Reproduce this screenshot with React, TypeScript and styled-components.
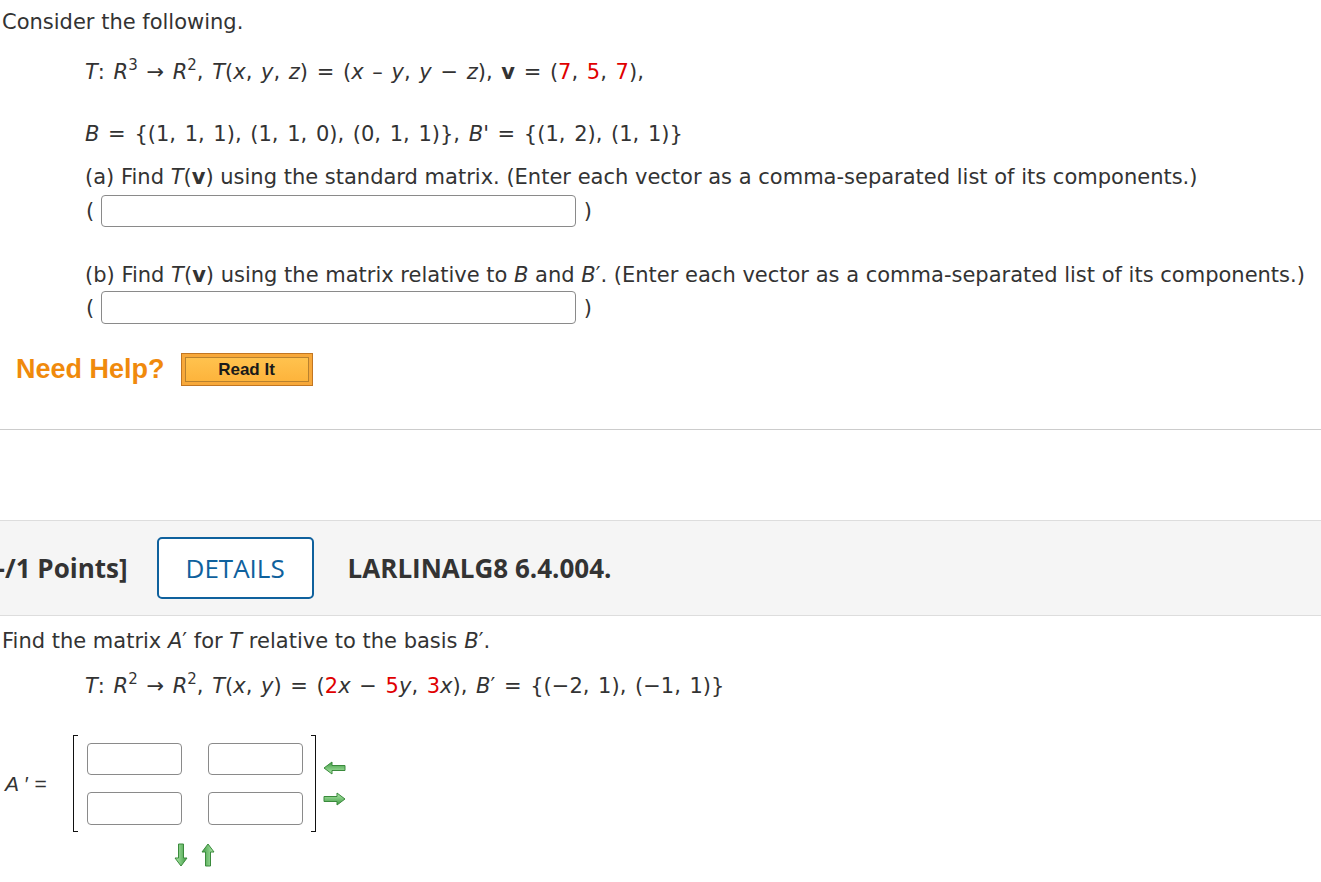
import React from "react";
import styled, { createGlobalStyle } from "styled-components";

const GlobalStyle = createGlobalStyle`
    html, body {
        margin: 0;
        padding: 0;
        background: #ffffff;
    }
    body {
        font-family: "DejaVu Sans", Verdana, sans-serif;
        color: #333333;
        overflow: hidden;
    }
`;

const Page = styled.div`
    width: 1321px;
    height: 882px;
    overflow: hidden;
`;

const Question = styled.div`
    padding: 9px 0 0 2px;
    font-size: 21px;
    line-height: 26px;
`;

const Line = styled.div<{ $indent?: number; $top?: number; $math?: boolean }>`
    padding-left: ${(p) => p.$indent ?? 0}px;
    margin-top: ${(p) => p.$top ?? 0}px;
    white-space: nowrap;
    word-spacing: ${(p) => (p.$math ? "2px" : "normal")};
`;

const I = styled.i`
    font-style: italic;
`;

const Red = styled.span`
    color: #e00000;
`;

const Bold = styled.b`
    font-weight: bold;
`;

const Sup = styled.sup`
    font-size: 15px;
    line-height: 0;
    vertical-align: 9px;
`;

const AnswerRow = styled.div<{ $top: number }>`
    display: flex;
    align-items: center;
    padding-left: 84px;
    margin-top: ${(p) => p.$top}px;
    gap: 1px;
    height: 33px;
`;

const Paren = styled.span`
    font-size: 21px;
    line-height: 26px;
    width: 14px;
`;

const TextBox = styled.div<{ $w: number; $h: number }>`
    width: ${(p) => p.$w}px;
    height: ${(p) => p.$h}px;
    border: 1px solid #8a8a8a;
    border-radius: 4px;
    box-sizing: border-box;
    background: #ffffff;
`;

const HelpRow = styled.div`
    display: flex;
    align-items: center;
    gap: 16px;
    padding-left: 16px;
    margin-top: 29px;
    height: 33px;
`;

const NeedHelp = styled.span`
    font-family: "Liberation Sans", Arial, sans-serif;
    font-weight: bold;
    font-size: 27px;
    color: #f08a0c;
`;

const ReadIt = styled.div`
    width: 132px;
    height: 33px;
    box-sizing: border-box;
    border: 1px solid #c27622;
    background: #f7a83a;
    padding: 3px;
    display: flex;
`;

const ReadItInner = styled.div`
    flex: 1;
    border: 1px solid #b8812e;
    background: linear-gradient(#ffc24e, #fdb43c);
    display: flex;
    align-items: center;
    justify-content: center;
    font-family: "Liberation Sans", Arial, sans-serif;
    font-weight: bold;
    font-size: 17px;
    color: #1a1a1a;
`;

const Divider = styled.hr`
    margin: 43px 0 0 0;
    border: none;
    border-top: 1px solid #cccccc;
`;

const Band = styled.div`
    margin-top: 90px;
    height: 94px;
    background: #f5f5f5;
    border-top: 1px solid #dddddd;
    border-bottom: 1px solid #dddddd;
    display: flex;
    align-items: center;
    font-family: "Open Sans", sans-serif;
    font-size: 26px;
    color: #333333;
`;

const Points = styled.span`
    font-weight: bold;
    margin-left: -12px;
    white-space: nowrap;
`;

const DetailsButton = styled.div`
    margin-left: 29px;
    width: 157px;
    height: 62px;
    box-sizing: border-box;
    border: 2px solid #0f619d;
    border-radius: 5px;
    display: flex;
    align-items: center;
    justify-content: center;
    color: #0f619d;
    background: #ffffff;
`;

const Code = styled.span`
    margin-left: 34px;
    font-weight: bold;
`;

const Question2 = styled.div`
    padding: 12px 0 0 2px;
    font-size: 21px;
    line-height: 26px;
`;

const MatrixRow = styled.div`
    display: flex;
    align-items: flex-start;
    margin-top: 36px;
    padding-left: 5px;
`;

const MatrixLabel = styled.span`
    width: 68px;
    height: 97px;
    display: flex;
    align-items: center;
    font-family: "Liberation Sans", Arial, sans-serif;
    font-size: 21px;
    white-space: pre;
`;

const MatrixWrap = styled.div`
    display: flex;
    flex-direction: column;
    align-items: flex-start;
`;

const MatrixInner = styled.div`
    display: flex;
    align-items: center;
`;

const Bracket = styled.div<{ $side: "left" | "right" }>`
    width: 5px;
    height: 97px;
    box-sizing: border-box;
    border: 1.5px solid #111111;
    ${(p) => (p.$side === "left" ? "border-right: none;" : "border-left: none;")}
`;

const Cells = styled.div`
    display: grid;
    grid-template-columns: 95px 95px;
    column-gap: 26px;
    row-gap: 17px;
    padding: 0 8px 0 9px;
`;

const SideArrows = styled.div`
    display: flex;
    flex-direction: column;
    gap: 17px;
    margin-left: 7px;
`;

const BottomArrows = styled.div`
    display: flex;
    gap: 13px;
    margin: 11px 0 0 101px;
`;

const HArrow: React.FC<{ dir: "left" | "right"; id: string }> = ({ dir, id }) => (
    <svg width={23} height={14} viewBox="0 0 23 14">
        <defs>
            <linearGradient id={id} x1="0" y1="0" x2="0" y2="1">
                <stop offset="0" stopColor="#b2ebad" />
                <stop offset="1" stopColor="#3f9b43" />
            </linearGradient>
        </defs>
        <g transform={dir === "left" ? "rotate(180 11.5 7)" : undefined}>
            <path
                d="M1 4.5 H14 V1 L22 7 L14 13 V9.5 H1 Z"
                fill={`url(#${id})`}
                stroke="#3a8a3c"
                strokeWidth="1"
                strokeLinejoin="round"
            />
        </g>
    </svg>
);

const VArrow: React.FC<{ dir: "up" | "down"; id: string }> = ({ dir, id }) => (
    <svg width={14} height={24} viewBox="0 0 14 24">
        <defs>
            <linearGradient id={id} x1="0" y1="0" x2="1" y2="0">
                <stop offset="0" stopColor="#b2ebad" />
                <stop offset="1" stopColor="#3f9b43" />
            </linearGradient>
        </defs>
        <g transform={dir === "up" ? "rotate(180 7 12)" : undefined}>
            <path
                d="M4.5 1 V15 H1 L7 23 L13 15 H9.5 V1 Z"
                fill={`url(#${id})`}
                stroke="#3a8a3c"
                strokeWidth="1"
                strokeLinejoin="round"
            />
        </g>
    </svg>
);

const App: React.FC = () => {
    return (
        <Page>
            <GlobalStyle />
            <Question>
                <Line>Consider the following.</Line>
                <Line $indent={83} $top={24} $math>
                    <I>T</I>: <I>R</I>
                    <Sup>3</Sup> → <I>R</I>
                    <Sup>2</Sup>, <I>T</I>(<I>x</I>, <I>y</I>, <I>z</I>) = (<I>x</I> – <I>y</I>, <I>y</I> − <I>z</I>),{" "}
                    <Bold>v</Bold> = (<Red>7</Red>, <Red>5</Red>, <Red>7</Red>),
                </Line>
                <Line $indent={83} $top={36} $math>
                    <I>B</I> = {"{"}(1, 1, 1), (1, 1, 0), (0, 1, 1){"}"}, <I>B</I>' = {"{"}(1, 2), (1, 1){"}"}
                </Line>
                <Line $indent={83} $top={17}>
                    (a) Find <I>T</I>(<Bold>v</Bold>) using the standard matrix. (Enter each vector as a comma-separated list of its components.)
                </Line>
                <AnswerRow $top={4}>
                    <Paren>(</Paren>
                    <TextBox $w={475} $h={32} />
                    <Paren>&nbsp;)</Paren>
                </AnswerRow>
                <Line $indent={83} $top={35}>
                    (b) Find <I>T</I>(<Bold>v</Bold>) using the matrix relative to <I>B</I> and <I>B</I>′. (Enter each vector as a comma-separated list of its components.)
                </Line>
                <AnswerRow $top={3}>
                    <Paren>(</Paren>
                    <TextBox $w={475} $h={33} />
                    <Paren>&nbsp;)</Paren>
                </AnswerRow>
            </Question>
            <HelpRow>
                <NeedHelp>Need Help?</NeedHelp>
                <ReadIt>
                    <ReadItInner>Read It</ReadItInner>
                </ReadIt>
            </HelpRow>
            <Divider />
            <Band>
                <Points>[-/1 Points]</Points>
                <DetailsButton>DETAILS</DetailsButton>
                <Code>LARLINALG8 6.4.004.</Code>
            </Band>
            <Question2>
                <Line>
                    Find the matrix <I>A</I>′ for <I>T</I> relative to the basis <I>B</I>′.
                </Line>
                <Line $indent={83} $top={19} $math>
                    <I>T</I>: <I>R</I>
                    <Sup>2</Sup> → <I>R</I>
                    <Sup>2</Sup>, <I>T</I>(<I>x</I>, <I>y</I>) = (<Red>2</Red>
                    <I>x</I> − <Red>5</Red>
                    <I>y</I>, <Red>3</Red>
                    <I>x</I>), <I>B</I>′ = {"{"}(−2, 1), (−1, 1){"}"}
                </Line>
            </Question2>
            <MatrixRow>
                <MatrixLabel>
                    <I>A</I>{" ′ ="}
                </MatrixLabel>
                <MatrixWrap>
                    <MatrixInner>
                        <Bracket $side="left" />
                        <Cells>
                            <TextBox $w={95} $h={32} />
                            <TextBox $w={95} $h={32} />
                            <TextBox $w={95} $h={33} />
                            <TextBox $w={95} $h={33} />
                        </Cells>
                        <Bracket $side="right" />
                        <SideArrows>
                            <HArrow dir="left" id="al" />
                            <HArrow dir="right" id="ar" />
                        </SideArrows>
                    </MatrixInner>
                    <BottomArrows>
                        <VArrow dir="down" id="ad" />
                        <VArrow dir="up" id="au" />
                    </BottomArrows>
                </MatrixWrap>
            </MatrixRow>
        </Page>
    );
};

export default App;
